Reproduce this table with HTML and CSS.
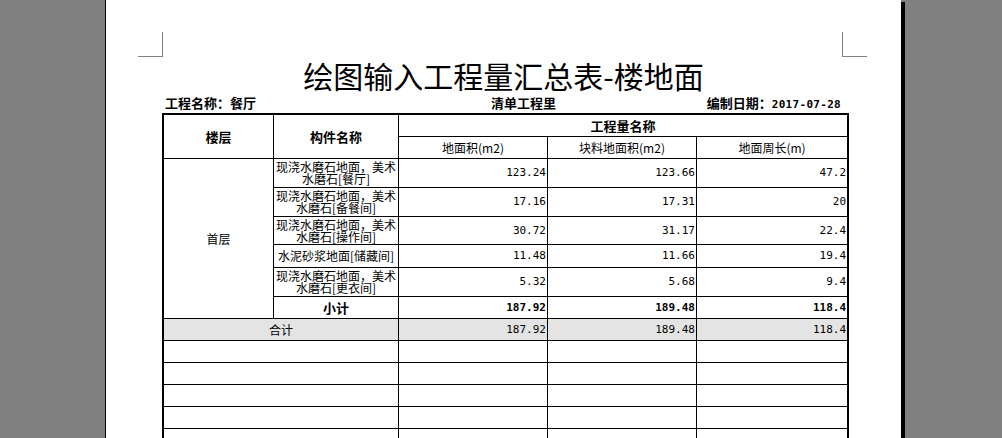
FILE: index.html
```html
<!DOCTYPE html>
<html lang="zh-CN">
<head>
<meta charset="utf-8">
<title>绘图输入工程量汇总表-楼地面</title>
<link rel="stylesheet" href="styles.css">
</head>
<body>
<div class="page">
  <div class="marks"><span class="mark mark-l"></span><span class="mark mark-r"></span></div>
  <h1 class="title">绘图输入工程量汇总表-楼地面</h1>
  <div class="info">
    <span class="info-l">工程名称：餐厅</span>
    <span class="info-c">清单工程里</span>
    <span class="info-r">编制日期：<span class="date">2017-07-28</span></span>
  </div>
  <table class="sheet">
    <colgroup>
      <col class="c1"><col class="c2"><col class="c3"><col class="c4"><col class="c5">
    </colgroup>
    <thead>
      <tr class="h1">
        <th rowspan="2">楼层</th>
        <th rowspan="2">构件名称</th>
        <th colspan="3" class="last">工程量名称</th>
      </tr>
      <tr class="h2">
        <td class="sub">地面积(m2)</td>
        <td class="sub">块料地面积(m2)</td>
        <td class="sub last">地面周长(m)</td>
      </tr>
    </thead>
    <tbody>
      <tr class="r29">
        <td rowspan="6" class="floor">首层</td>
        <td class="name">现浇水磨石地面，美术水磨石[餐厅]</td>
        <td class="num">123.24</td><td class="num">123.66</td><td class="num last">47.2</td>
      </tr>
      <tr class="r29">
        <td class="name">现浇水磨石地面，美术水磨石[备餐间]</td>
        <td class="num">17.16</td><td class="num">17.31</td><td class="num last">20</td>
      </tr>
      <tr class="r28">
        <td class="name">现浇水磨石地面，美术水磨石[操作间]</td>
        <td class="num">30.72</td><td class="num">31.17</td><td class="num last">22.4</td>
      </tr>
      <tr class="r23">
        <td class="name">水泥砂浆地面[储藏间]</td>
        <td class="num">11.48</td><td class="num">11.66</td><td class="num last">19.4</td>
      </tr>
      <tr class="r29">
        <td class="name">现浇水磨石地面，美术水磨石[更衣间]</td>
        <td class="num">5.32</td><td class="num">5.68</td><td class="num last">9.4</td>
      </tr>
      <tr class="r22 subtotal">
        <td class="label">小计</td>
        <td class="num">187.92</td><td class="num">189.48</td><td class="num last">118.4</td>
      </tr>
      <tr class="r22 total">
        <td colspan="2" class="plain">合计</td>
        <td class="num">187.92</td><td class="num">189.48</td><td class="num last">118.4</td>
      </tr>
      <tr class="r22"><td colspan="2"></td><td></td><td></td><td class="last"></td></tr>
      <tr class="r22"><td colspan="2"></td><td></td><td></td><td class="last"></td></tr>
      <tr class="r22"><td colspan="2"></td><td></td><td></td><td class="last"></td></tr>
      <tr class="r22"><td colspan="2"></td><td></td><td></td><td class="last"></td></tr>
      <tr class="r22"><td colspan="2"></td><td></td><td></td><td class="last"></td></tr>
    </tbody>
  </table>
</div>
</body>
</html>
```
FILE: styles.css
```css
html, body {
  margin: 0;
  padding: 0;
}
body {
  background: #808080;
  height: 438px;
  overflow: hidden;
  font-family: "Noto Sans CJK SC", "Liberation Sans", sans-serif;
  color: #000;
}
.page {
  margin-left: 105px;
  width: 795px;
  min-height: 640px;
  background: #fff;
  border-left: 1px solid #000;
  box-shadow: 4px 2px 0 #000;
}
.marks {
  display: flex;
  justify-content: space-between;
  padding: 32px 34px 0 32px;
}
.mark {
  width: 24px;
  height: 24px;
  border-bottom: 1px solid #808080;
}
.mark-l { border-right: 1px solid #808080; }
.mark-r { border-left: 1px solid #808080; }

.title {
  margin: 3px 0 0;
  font-size: 30px;
  line-height: 30px;
  font-weight: normal;
  text-align: center;
}
.info {
  display: flex;
  width: 687px;
  margin: 6px 0 0 56px;
  font-size: 13px;
  line-height: 13px;
  font-weight: bold;
}
.info-l {
  width: 326px;
  padding-left: 3px;
}
.info-r {
  margin-left: auto;
  padding-right: 8px;
}
.date {
  font-family: "DejaVu Sans Mono", monospace;
  font-size: 11px;
  letter-spacing: 0.3px;
}

.sheet {
  margin: 2px 0 0 56px;
  width: 687px;
  table-layout: fixed;
  border-collapse: separate;
  border-spacing: 0;
  border-left: 2px solid #000;
  border-top: 2px solid #000;
}
.c1 { width: 110px; }
.c2 { width: 125px; }
.c3 { width: 149px; }
.c4 { width: 149px; }
.c5 { width: 152px; }

.sheet th,
.sheet td {
  box-sizing: border-box;
  border-right: 1px solid #000;
  border-bottom: 1px solid #000;
  padding: 0 1px;
  font-size: 12px;
  line-height: 12px;
  font-weight: normal;
  text-align: center;
  vertical-align: middle;
}
.sheet th {
  font-size: 13px;
  line-height: 13px;
  font-weight: bold;
}
.sheet .last { border-right: 2px solid #000; }

.h1 th, .h1 td { height: 22px; }
.h2 td { height: 22px; }
.r29 td { height: 29px; }
.r28 td { height: 28px; }
.r23 td { height: 23px; }
.r22 td { height: 22px; }

.sheet td.num {
  text-align: right;
  padding-right: 1px;
  font-family: "DejaVu Sans Mono", monospace;
  font-size: 11px;
}
.subtotal td.num { font-weight: bold; }
.subtotal td.label {
  font-size: 13px;
  font-weight: bold;
}
.total td { background: #e4e4e4; }
```
